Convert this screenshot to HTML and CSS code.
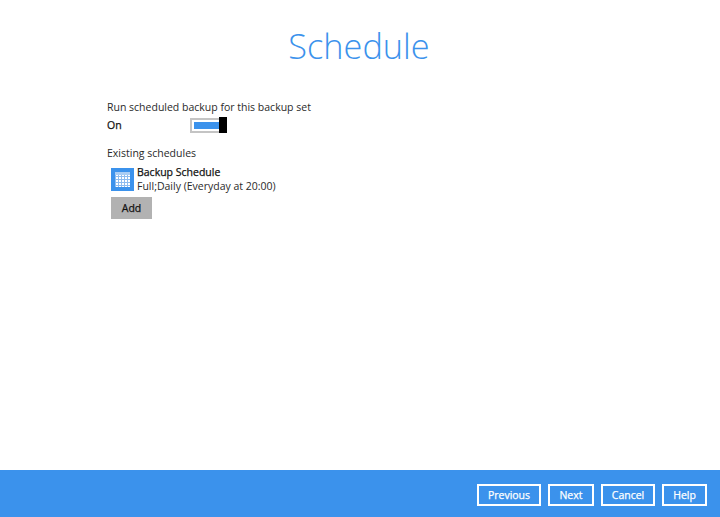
FILE: index.html
```html
<!DOCTYPE html>
<html lang="en">
  <head>
    <meta charset="UTF-8" />
    <title>Schedule</title>
    <link rel="stylesheet" href="styles.css" />
  </head>
  <body>
    <main class="content">
      <h1 class="title">Schedule</h1>

      <section class="settings">
        <p class="label">Run scheduled backup for this backup set</p>
        <div class="toggle-row">
          <span class="toggle-state">On</span>
          <div class="toggle">
            <div class="toggle-track"><div class="toggle-fill"></div></div>
            <div class="toggle-thumb"></div>
          </div>
        </div>

        <p class="label existing">Existing schedules</p>
        <div class="schedule">
          <svg class="schedule-icon" width="23" height="23" viewBox="0 0 23 23">
            <rect width="23" height="23" fill="#3b92ec" />
            <rect x="4" y="4" width="15" height="15" fill="#fff" />
            <rect x="4" y="4" width="15" height="3" fill="#a9cdf4" />
            <path d="M4.5 7v12M7.5 7v12M10.5 7v12M13.5 7v12M16.5 7v12M4 8.5h15M4 11.5h15M4 14.5h15M4 17.5h15" stroke="#8dbcf0" stroke-width="1" fill="none" />
          </svg>
          <div class="schedule-text">
            <div class="schedule-name">Backup Schedule</div>
            <div class="schedule-desc">Full;Daily (Everyday at 20:00)</div>
          </div>
        </div>
        <button class="add-btn">Add</button>
      </section>
    </main>

    <footer class="footer">
      <button class="nav-btn previous">Previous</button>
      <button class="nav-btn next">Next</button>
      <button class="nav-btn cancel">Cancel</button>
      <button class="nav-btn help">Help</button>
    </footer>
  </body>
</html>
```

FILE: styles.css
```css
html {
  box-sizing: border-box;
}

*,
*:before,
*:after {
  box-sizing: inherit;
}

body {
  margin: 0;
  height: 517px;
  display: flex;
  flex-direction: column;
  background: #fff;
  color: #2a2a2a;
  font-family: "Open Sans", sans-serif;
  font-size: 10.5px;
  overflow: hidden;
}

.content {
  flex: 1;
}

.title {
  margin: 0;
  padding: 24px 2px 0 0;
  text-align: center;
  font-size: 34.3px;
  line-height: 44px;
  font-weight: 300;
  color: #3b92ec;
}

.settings {
  padding: 31px 0 0 107px;
}

.label {
  margin: 0;
  line-height: 16px;
}

.toggle-row {
  display: flex;
  align-items: center;
  height: 16px;
  margin-top: 2px;
}

.toggle-state {
  width: 83px;
  -webkit-text-stroke: 0.25px #111;
  color: #111;
}

.toggle {
  display: flex;
  align-items: center;
}

.toggle-track {
  width: 29px;
  height: 15px;
  padding: 2px 0 2px 2px;
  border: 2px solid #c4c4c4;
  border-right: 0;
  background: #fff;
}

.toggle-fill {
  height: 100%;
  background: #3b92ec;
}

.toggle-thumb {
  width: 8px;
  height: 16px;
  background: #000;
}

.existing {
  margin-top: 12px;
}

.schedule {
  display: flex;
  align-items: center;
  gap: 3px;
  margin: 4px 0 0 4px;
}

.schedule-text {
  line-height: 14px;
}

.schedule-name {
  -webkit-text-stroke: 0.25px #111;
  color: #111;
}

.add-btn {
  display: block;
  width: 41px;
  height: 22px;
  margin: 4px 0 0 4px;
  padding: 0;
  border: 0;
  background: #b2b2b2;
  color: #111;
  -webkit-text-stroke: 0.25px #111;
  font: 400 10.5px "Open Sans", sans-serif;
}

.footer {
  height: 47px;
  display: flex;
  justify-content: flex-end;
  align-items: center;
  gap: 7px;
  padding: 2px 13px 0 0;
  background: #3b92ec;
}

.nav-btn {
  height: 22px;
  padding: 0;
  border: 2px solid #fff;
  background: transparent;
  color: #fff;
  -webkit-text-stroke: 0.25px #fff;
  font: 400 10.5px "Open Sans", sans-serif;
}

.previous {
  width: 64px;
}

.next {
  width: 46px;
}

.cancel {
  width: 54px;
}

.help {
  width: 45px;
}
```
